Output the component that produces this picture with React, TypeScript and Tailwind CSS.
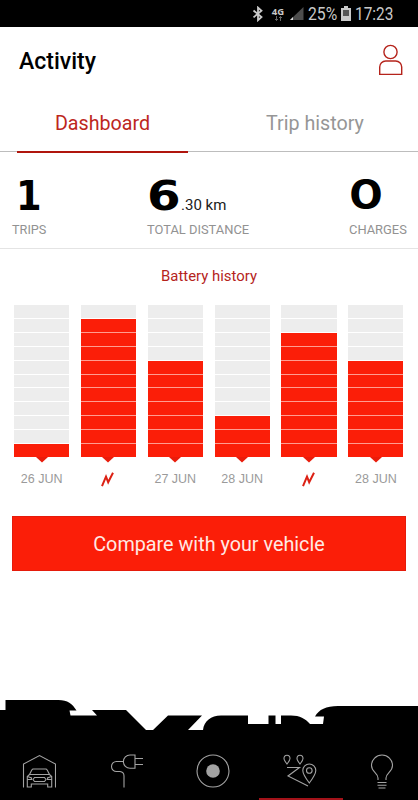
import React from 'react';
import clsx from 'clsx';

const CELLS = 11;

const history = [
  { label: '26 JUN', level: 1 },
  { label: null, level: 10 },
  { label: '27 JUN', level: 7 },
  { label: '28 JUN', level: 3 },
  { label: null, level: 9 },
  { label: '28 JUN', level: 7 },
];

const StatusBar: React.FC = () => (
  <div className="flex h-[27px] items-center bg-black pl-[252px] text-[#c9c9c9]">
    <svg className="h-4 w-3" viewBox="0 0 12 16" fill="none" stroke="currentColor" strokeWidth="1.8">
      <path d="M1.5 4.5 9.5 11 6 14.2V1.6l3.5 3.2-8 6.6" />
    </svg>
    <div className="ml-[7px] flex w-[14px] flex-col items-center">
      <span className="font-['Open_Sans'] text-[9.5px] leading-[9px] font-bold">4G</span>
      <svg className="h-[5px] w-[9px]" viewBox="0 0 9 5" stroke="#666" fill="none">
        <path d="M2.5 0v4.5M1 3l1.5 1.5L4 3M6.5 5V.5M5 2 6.5.5 8 2" />
      </svg>
    </div>
    <svg className="ml-1 h-[15px] w-[15px]" viewBox="0 0 15 15">
      <path d="M14.5 1v13H1z" fill="#4d4d4d" />
      <path d="M4 11v3H1z" fill="#ddd" />
    </svg>
    <span className="ml-1 w-[29px] origin-left scale-x-[.9] pt-[2px] text-[17.5px] leading-none">25%</span>
    <svg className="ml-1 h-[15px] w-[10px] shrink-0" viewBox="0 0 10 15">
      <path d="M3 0h4v2h3v13H0V2h3z" fill="#c9c9c9" />
      <path d="M2 4h6v6H2z" fill="#555" />
    </svg>
    <span className="ml-1 origin-left scale-x-[.88] pt-[2px] text-[17.5px] leading-none">17:23</span>
  </div>
);

const Header: React.FC = () => (
  <header className="flex h-[67px] items-center justify-between pr-[15px] pl-[19px]">
    <h1 className="pt-[2px] text-[23px] leading-none font-medium text-black">Activity</h1>
    <svg className="mb-px h-8 w-6" viewBox="0 0 24 32" fill="none" stroke="#b5231b" strokeWidth="1.4">
      <circle cx="11.5" cy="8" r="6.6" />
      <path d="M.7 30.4V23a6 6 0 0 1 6-6h10a6 6 0 0 1 6 6v7.4z" />
    </svg>
  </header>
);

const Tabs: React.FC = () => (
  <nav className="grid h-[58px] grid-cols-[205px_213px] border-b border-[#bdbdbd] text-center text-[19.7px] leading-[59px]">
    <div className="mx-[17px] h-[59px] border-b-2 border-[#b0150d] text-[#bd271d]">Dashboard</div>
    <div className="pl-[7px] text-[#969696]">Trip history</div>
  </nav>
);

const Digit: React.FC<{ children: string; className?: string }> = ({ children, className }) => (
  <span className={clsx('inline-block origin-left leading-[40px] text-black', className)}>{children}</span>
);

const Stats: React.FC = () => (
  <section className="flex h-[97px] border-b border-[#e4e4e4] pt-[24px] pl-3 text-[12.9px] text-[#929292]">
    <div className="w-[135px]">
      <div className="h-10 pl-[4px]">
        <Digit className="scale-x-[.92] font-['DejaVu_Sans'] text-[40px] font-bold">1</Digit>
      </div>
      <div className="pt-[4px] text-[12.7px]">TRIPS</div>
    </div>
    <div className="w-[202px]">
      <div className="flex h-10 items-baseline">
        <Digit className="w-[34px] scale-x-[1.18] font-['DejaVu_Sans'] text-[41px] font-bold">6</Digit>
        <span className="text-[15px] text-[#202020]">.30 km</span>
      </div>
      <div className="pt-[4px]">TOTAL DISTANCE</div>
    </div>
    <div>
      <div className="h-10">
        <Digit className="mt-[-2px] scale-x-[1.23] font-['Inter'] text-[41px] font-bold">0</Digit>
      </div>
      <div className="pt-[4px]">CHARGES</div>
    </div>
  </section>
);

const BatteryBar: React.FC<{ label: string | null; level: number }> = ({ label, level }) => (
  <div className="flex flex-col items-center">
    <div className="flex h-[152px] w-full flex-col gap-px">
      {Array.from({ length: CELLS }, (_, i) => {
        const filled = i >= CELLS - level;
        return (
          <div
            key={i}
            className={clsx(
              'flex-1',
              filled ? 'bg-[#fb1e08]' : 'bg-[#ededed]',
              filled && i > CELLS - level && 'shadow-[0_-1px_0_#ff9c90]',
            )}
          />
        );
      })}
    </div>
    <svg className="h-[6px] w-3" viewBox="0 0 12 6">
      <path d="M0 0h12L6 5.5z" fill="#e91c0b" />
    </svg>
    <div className="flex h-8 items-center font-['Liberation_Sans'] text-[12.5px] text-[#9a9a9a]">
      {label ?? (
        <svg className="ml-[-1px] h-[15px] w-[13px]" viewBox="0 0 13 15" fill="none" stroke="#dc2114" strokeWidth="2">
          <path d="M1 14.2 5 4.600 7.200 10.200 12 .8" />
        </svg>
      )}
    </div>
  </div>
);

const navIcon = 'fill-none stroke-[#a3a3a3] stroke-[1.1]';

const BottomNav: React.FC = () => (
  <footer className="mt-auto">
    <svg className="block h-[31px] w-full" viewBox="0 0 418 31">
      <path d="M0 10h5.500V0h53c9 0 14 4 18 10.500H69.500l1 5H97L92 10h34l20 20h7l15-14.500h34L188 30h15c1-9 8-14.500 18-14.500h27V24h20.500v-8.500h7V24h5.500v-8.500h10c9 0 14 3 19 8.500h13l1-7.500h-9c4-7 11-10.500 23-10.500h80v25H0z" />
    </svg>
    <nav className="flex h-[69px] bg-black">
      <div className="w-[79px]">
        <svg className="mt-[23px] ml-[22px] h-[34px] w-[34px]" viewBox="0 0 34 34">
          <g className={navIcon}>
            <path d="M1.500 33.500V10L17.500 1.500 33.500 10v23.500" />
            <path d="m7.500 20.500 2.300-4.500c.3-.7.800-1 1.500-1h12.400c.7 0 1.200.3 1.500 1l2.300 4.500zM7.500 20.500l-2.200 2V33h4v-3h16.400v3h4V22.500l-2.200-2M5.500 22.500l4 1.500v1.500h-4M29.500 22.500l-4 1.500v1.500h4M12.500 23.500h10l1.500 2-1.500 2h-10l-1.500-2z" />
          </g>
        </svg>
      </div>
      <div className="w-[90px]">
        <svg className="mt-[23px] ml-[31px] h-[34px] w-[36px]" viewBox="0 0 36 34">
          <g className={navIcon}>
            <path d="M25 1h-5a6.600 6.600 0 0 0 0 13.200h5zM25 4.500h8M25 10.500h8M13.400 7.500H6.500a5 5 0 0 0 0 10H10a4.500 4.500 0 0 1 4 4.500v11.500" />
          </g>
        </svg>
      </div>
      <div className="w-[90px]">
        <svg className="mt-[23px] ml-[27px] h-[34px] w-[34px]" viewBox="0 0 34 34">
          <circle cx="17" cy="17" r="16" className={navIcon} />
          <circle cx="17" cy="17" r="6.800" fill="#a3a3a3" />
        </svg>
      </div>
      <div className="w-[84px] border-b-2 border-[#a31219]">
        <svg className="mt-[23px] ml-[23px] h-[34px] w-[36px]" viewBox="0 0 36 34">
          <g className={navIcon}>
            <path d="M5 10C3 7.500 2 6 2 4.500a3 3.300 0 0 1 6 0C8 6 7 7.500 5 10zM18 10c-2-2.500-3-4-3-5.500a3 3.300 0 0 1 6 0c0 1.500-1 3-3 5.500zM5 13.500h12.500L6 22l20 10" />
            <path d="M27.300 29c-4.500-6-6.500-9-6.500-12.500a6.500 6.500 0 0 1 13 0c0 3.500-2 6.500-6.500 12.500z" />
            <circle cx="27.300" cy="16.500" r="2.800" />
          </g>
        </svg>
      </div>
      <div className="flex-1">
        <svg className="mt-[23px] ml-[27px] h-[36px] w-[24px]" viewBox="0 0 24 36">
          <g className={navIcon}>
            <path d="M8 26v-2c0-5-6.500-6-6.500-12.500a10.500 10.500 0 0 1 21 0C22.500 18 16 19 16 24v2M7.500 28.500h9M7.500 31.200h9M8.500 34h7" />
          </g>
        </svg>
      </div>
    </nav>
  </footer>
);

export default function App() {
  return (
    <div className="flex h-[800px] w-[418px] flex-col overflow-hidden bg-white font-[Roboto,sans-serif]">
      <StatusBar />
      <Header />
      <Tabs />
      <Stats />
      <h2 className="pt-[16px] text-center text-[14.9px] leading-[22px] text-[#b5231b]">Battery history</h2>
      <section className="mt-[18px] grid grid-cols-6 gap-x-[11.6px] pr-[14.5px] pl-[14px]">
        {history.map((bar, i) => (
          <BatteryBar key={i} {...bar} />
        ))}
      </section>
      <button className="mx-3 mt-[21px] h-[55px] border border-[#e51b0b] bg-[#fb1e08] pt-[2px] text-[19.8px] text-[#ffe9e4]">
        Compare with your vehicle
      </button>
      <BottomNav />
    </div>
  );
}
